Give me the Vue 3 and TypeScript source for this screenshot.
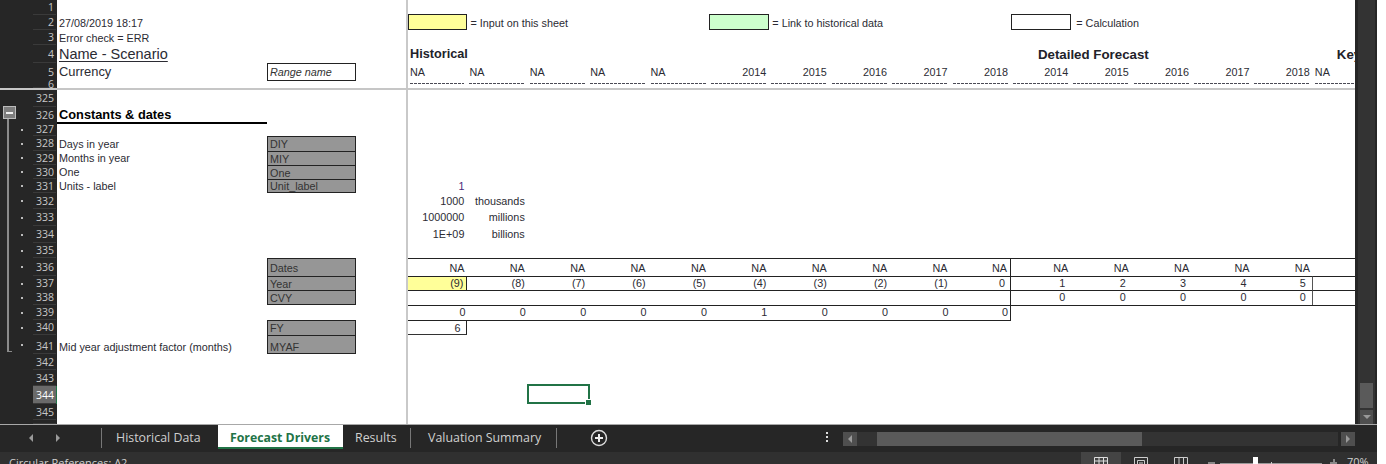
<script setup lang="ts">
interface Cell {
  t?: string
  cls?: string
}

interface Row {
  n: string
  h: number
  dot?: boolean
  label?: string
  labelCls?: string
  name?: string
  nameCls?: string
  cells?: Cell[]
  current?: boolean
  cls?: string
}

const COLS = 16

// builds a row of cells, same class on each, extra classes by column index
const line = (texts: string[], cls: string, extra: Record<number, string> = {}): Cell[] => {
  const out: Cell[] = []
  for (let i = 0; i < COLS; i++) {
    out.push({ t: texts[i] ?? '', cls: `${cls} ${extra[i] ?? ''}` })
  }
  return out
}

const na = Array(15).fill('NA')
const yearTitles = ['NA', 'NA', 'NA', 'NA', 'NA', '2014', '2015', '2016', '2017', '2018', '2014', '2015', '2016', '2017', '2018', 'NA']
const forecastPad = { 10: 'p6', 11: 'p6', 12: 'p6', 13: 'p6', 14: 'p6' }

const legendRow: Cell[] = line([], '')
legendRow[0] = { cls: 'legend yellow' }
legendRow[1] = { t: '= Input on this sheet', cls: 'left over note' }
legendRow[5] = { cls: 'legend green' }
legendRow[6] = { t: '= Link to historical data', cls: 'left over note' }
legendRow[10] = { cls: 'legend' }
legendRow[11] = { t: '= Calculation', cls: 'left over pad' }

const titleRow: Cell[] = line([], '')
titleRow[0] = { t: 'Historical', cls: 'left title over' }
titleRow[10] = { t: 'Detailed Forecast', cls: 'left title over forecast' }
titleRow[15] = { t: 'Key', cls: 'left title over key' }

const yearRow = yearTitles.map((t, i): Cell => ({ t, cls: i < 5 || i === 15 ? 'left' : '' }))
const dashRow = line([], 'dash')

const selRow: Cell[] = line([], '')
selRow[2] = { cls: 'sel' }

const rows: Row[] = [
  { n: '1', h: 15 },
  { n: '2', h: 15, label: '27/08/2019 18:17', cells: legendRow },
  { n: '3', h: 15, label: 'Error check = ERR' },
  { n: '4', h: 18, label: 'Name - Scenario', labelCls: 'big under', cells: titleRow },
  { n: '5', h: 17, label: 'Currency', labelCls: 'mid', name: 'Range name', nameCls: 'range', cells: yearRow },
  { n: '6', h: 8, cells: dashRow },
]

const body: Row[] = [
  { n: '325', h: 17 },
  { n: '326', h: 16, label: 'Constants & dates', labelCls: 'heading' },
  { n: '327', h: 13, dot: true },
  { n: '328', h: 15, dot: true, label: 'Days in year', name: 'DIY', nameCls: 'nm' },
  { n: '329', h: 14, dot: true, label: 'Months in year', name: 'MIY', nameCls: 'nm' },
  { n: '330', h: 14, dot: true, label: 'One', name: 'One', nameCls: 'nm' },
  {
    n: '331', h: 14, dot: true, label: 'Units - label', name: 'Unit_label', nameCls: 'nm end',
    cells: [{ t: '1', cls: 'purple' }],
  },
  { n: '332', h: 16, dot: true, cells: [{ t: '1000' }, { t: 'thousands' }] },
  { n: '333', h: 17, dot: true, cls: 'up', cells: [{ t: '1000000' }, { t: 'millions' }] },
  { n: '334', h: 17, dot: true, cls: 'up', cells: [{ t: '1E+09' }, { t: 'billions' }] },
  { n: '335', h: 15, dot: true },
  { n: '336', h: 18, dot: true, name: 'Dates', nameCls: 'nm', cells: line(na, 'bt', { 9: 'br' }) },
  {
    n: '337', h: 14, dot: true, cls: 'up', name: 'Year', nameCls: 'nm',
    cells: line(['(9)', '(8)', '(7)', '(6)', '(5)', '(4)', '(3)', '(2)', '(1)', '0', '1', '2', '3', '4', '5'], 'bt', {
      ...forecastPad,
      0: 'yellow br',
      9: 'br p5',
      14: 'br-soft p6',
    }),
  },
  {
    n: '338', h: 15, dot: true, cls: 'up', name: 'CVY', nameCls: 'nm end',
    cells: line(['', '', '', '', '', '', '', '', '', '', '0', '0', '0', '0', '0'], 'bt', {
      ...forecastPad,
      9: 'br',
      14: 'br-soft p6',
    }),
  },
  {
    n: '339', h: 15, dot: true, cls: 'up',
    cells: line(['0', '0', '0', '0', '0', '1', '0', '0', '0', '0'], 'bt p2', { 9: 'br p1' }).map((c, i) =>
      i > 9 ? { cls: 'bt' } : c,
    ),
  },
  {
    n: '340', h: 15, dot: true, name: 'FY', nameCls: 'nm',
    cells: [{ t: '6', cls: 'box-6' }, ...Array.from({ length: 9 }, (): Cell => ({ cls: 'bt' }))],
  },
  { n: '341', h: 19, dot: true, cls: 'low', label: 'Mid year adjustment factor (months)', name: 'MYAF', nameCls: 'nm end' },
  { n: '342', h: 16 },
  { n: '343', h: 16 },
  { n: '344', h: 18, current: true, cells: selRow },
  { n: '345', h: 16 },
  { n: '', h: 4 },
]

const cellAt = (row: Row, i: number): Cell => row.cells?.[i] ?? {}
</script>

<template>
  <div class="excel">
    <div class="workspace">
      <div class="sheet">
        <template v-for="(list, li) in [rows, body]" :key="li">
          <div v-if="li === 1" class="freeze"></div>
          <div v-for="row in list" :key="row.n" class="row" :class="row.cls" :style="{ height: row.h + 'px' }">
            <div class="rowhead" :class="{ current: row.current }">
              <i v-if="row.dot" class="dot"></i>
              <span class="num">{{ row.n }}</span>
            </div>
            <div class="label" :class="row.labelCls">{{ row.label }}</div>
            <div class="name" :class="row.nameCls">{{ row.name }}</div>
            <div class="gap"></div>
            <div v-for="i in COLS" :key="i" class="cell" :class="cellAt(row, i - 1).cls">
              <span v-if="cellAt(row, i - 1).t">{{ cellAt(row, i - 1).t }}</span>
            </div>
          </div>
        </template>
        <div class="outline">
          <div class="minus"></div>
          <div class="bracket"></div>
        </div>
      </div>
      <div class="vscroll">
        <div class="vthumb"></div>
        <div class="vbtn"><i></i></div>
      </div>
    </div>

    <div class="tabbar">
      <div class="nav">
        <i class="tri-left"></i>
        <i class="tri-right"></i>
      </div>
      <div class="tab first">Historical Data</div>
      <div class="tab active">Forecast Drivers</div>
      <div class="tab results">Results</div>
      <div class="tab valuation">Valuation Summary</div>
      <svg class="add" width="18" height="18" viewBox="0 0 18 18">
        <circle cx="9" cy="9" r="7.5" fill="none" stroke="#ddd" stroke-width="1.4" />
        <path d="M9 5v8M5 9h8" stroke="#eee" stroke-width="2" />
      </svg>
      <div class="more"><i></i><i></i><i></i></div>
      <div class="hscroll">
        <div class="hbtn"><i class="tri-left"></i></div>
        <div class="htrack"><div class="hthumb"></div></div>
        <div class="hbtn"><i class="tri-right"></i></div>
      </div>
    </div>

    <div class="status">
      <span class="circ">Circular References: A2</span>
      <div class="views">
        <div class="view on">
          <svg width="14" height="12" viewBox="0 0 14 12">
            <path d="M.5.5h13v11H.5zM.5 4h13M.5 8h13M5 .5v11M9.500 .5v11" fill="none" stroke="#ddd" />
          </svg>
        </div>
        <div class="view">
          <svg width="14" height="12" viewBox="0 0 14 12">
            <path d="M.5.5h13v11H.5zM3.500 3.500h7v8h-7zM5 6h4M5 8h4" fill="none" stroke="#ccc" />
          </svg>
        </div>
        <div class="view">
          <svg width="14" height="12" viewBox="0 0 14 12">
            <path d="M.5.5h13v11H.5zM5 .5v11M9.500 .5v11" fill="none" stroke="#ccc" />
          </svg>
        </div>
      </div>
      <div class="zoombar">
        <i class="zminus"></i>
        <div class="slider"><i class="knob"></i><i class="tick"></i></div>
        <i class="zplus"></i>
      </div>
      <span class="pct">70%</span>
    </div>
  </div>
</template>

<style scoped>
.excel {
  width: 1377px;
  height: 464px;
  overflow: hidden;
  display: flex;
  flex-direction: column;
  background: #262626;
  font-family: 'Liberation Sans', Arial, sans-serif;
}

.workspace {
  display: flex;
  height: 424px;
  flex: none;
}

.sheet {
  position: relative;
  width: 1355px;
  overflow: hidden;
  background: #fff;
  flex: none;
}

.row {
  display: grid;
  grid-template-columns: 57px 210px 89px 52px 59.4px repeat(15, 60.4px);
  font-size: 10.8px;
  color: #2b2b33;
}

.freeze {
  height: 2px;
  background: #c6c6c6;
  position: relative;
  z-index: 2;
}

.rowhead {
  position: relative;
  background: #262626;
  display: flex;
  justify-content: flex-end;
  overflow: hidden;
}

.num {
  width: 23px;
  margin-right: 1px;
  padding-right: 2px;
  box-sizing: border-box;
  text-align: right;
  font-family: 'Open Sans', sans-serif;
  font-size: 10.5px;
  color: #c6c6c6;
  display: flex;
  align-items: center;
  justify-content: flex-end;
  border-bottom: 1px solid #3a3a3a;
}

.rowhead.current .num {
  background: #6a6a6a;
  color: #fff;
}

.rowhead.current {
  box-shadow: inset -1px 0 0 #217346;
}

.dot {
  position: absolute;
  left: 21px;
  top: 50%;
  width: 2px;
  height: 2px;
  margin-top: -1px;
  background: #bbb;
}

.label {
  padding-left: 2px;
  display: flex;
  align-items: center;
  white-space: nowrap;
  overflow: visible;
  min-width: 0;
}

.label.big {
  font-size: 14.5px;
}

.label.mid {
  font-size: 12.9px;
  padding-bottom: 2px;
}

.label.under {
  text-decoration: underline;
  text-underline-offset: 2px;
  text-decoration-thickness: 1px;
}

.label.heading {
  font-size: 12.8px;
  font-weight: 700;
  color: #000;
  border-bottom: 2px solid #000;
  box-sizing: border-box;
}

.name {
  display: flex;
  align-items: center;
  padding-left: 2px;
  white-space: nowrap;
  min-width: 0;
  box-sizing: border-box;
}

.name.nm {
  background: #969696;
  color: #333;
  border: 1px solid #222;
  border-bottom: none;
}

.name.nm.end {
  border-bottom: 1px solid #222;
}

.name.range {
  align-self: start;
  height: 18px;
  border: 1px solid #222;
  font-style: italic;
  font-size: 10.8px;
  color: #333;
}

.row.low .label,
.row.low .name,
.row.low .num {
  padding-top: 4px;
}

.row.up .cell {
  padding-bottom: 2px;
}

.gap {
  border-right: 2px solid #c9c9c9;
  box-sizing: content-box;
  width: 50px;
}

.cell {
  position: relative;
  display: flex;
  align-items: center;
  justify-content: flex-end;
  padding-right: 3px;
  box-sizing: border-box;
  white-space: nowrap;
  min-width: 0;
}

.cell.p1 {
  padding-right: 1px;
}

.cell.p2 {
  padding-right: 2px;
}

.cell.p5 {
  padding-right: 5px;
}

.cell.p6 {
  padding-right: 6px;
}

.cell.left {
  justify-content: flex-start;
  padding-left: 2px;
  padding-right: 0;
}

.cell.over {
  overflow: visible;
}

.cell.note {
  padding-left: 3px;
}

.cell.pad {
  padding-left: 5px;
}

.cell.title {
  font-size: 12.7px;
  font-weight: 700;
  color: #22222a;
}

.cell.forecast {
  padding-left: 27px;
  font-size: 13.3px;
}

.cell.key {
  padding-left: 24px;
  font-size: 13.3px;
}

.cell.purple {
  color: #4b2a7b;
}

.cell.legend {
  border: 1px solid #222;
  margin-top: -1px;
}

.cell.yellow {
  background: #ffff99;
}

.cell.green {
  background: #ccffcc;
}

.cell.bt {
  border-top: 1px solid #222;
}

.cell.br {
  border-right: 1px solid #222;
}

.cell.br-soft {
  border-right: 1px solid #555;
}

.cell.box-6 {
  border-top: 1px solid #222;
  border-right: 1px solid #222;
  border-bottom: 1px solid #333;
  padding-right: 6px;
}

.cell.dash {
  padding: 0;
  margin: 3px 3px 0 2px;
  height: 1px;
  background: repeating-linear-gradient(90deg, #4a4a55 0 3px, #fff 3px 4px);
}

.cell.sel {
  z-index: 1;
}

.cell.sel::before {
  content: '';
  position: absolute;
  inset: -2px -2px 0 -1px;
  border: 2px solid #217346;
}

.cell.sel::after {
  content: '';
  position: absolute;
  right: -3px;
  bottom: -1px;
  width: 5px;
  height: 5px;
  background: #217346;
  border: 1px solid #fff;
  border-right: none;
  border-bottom: none;
}

.outline {
  position: absolute;
  left: 0;
  top: 0;
}

.minus {
  position: absolute;
  left: 3px;
  top: 106px;
  width: 13px;
  height: 13px;
  box-sizing: border-box;
  background: linear-gradient(#f0f0f0, #f0f0f0) center / 7px 2px no-repeat, #7d7d7d;
  border: 1px solid #bbb;
}

.bracket {
  position: absolute;
  left: 7px;
  top: 119px;
  width: 5px;
  height: 233px;
  box-sizing: border-box;
  border-left: 2px solid #8a8a8a;
  border-bottom: 1px solid #8a8a8a;
}

.vscroll {
  flex: none;
  width: 22px;
  height: 424px;
  box-sizing: border-box;
  padding-left: 3px;
  display: flex;
  flex-direction: column;
  justify-content: flex-end;
  background: linear-gradient(90deg, #262626 0 3px, #333 3px 20px, #262626 20px);
}

.vthumb {
  width: 13px;
  height: 25px;
  margin: 0 0 2px 2px;
  background: #5a5a5a;
}

.vbtn {
  width: 13px;
  height: 14px;
  margin-left: 2px;
  background: #4f4f4f;
  display: flex;
  align-items: center;
  justify-content: center;
}

.vbtn i {
  border-left: 4px solid transparent;
  border-right: 4px solid transparent;
  border-top: 4px solid #999;
}

.tabbar {
  flex: none;
  height: 28px;
  display: flex;
  align-items: flex-start;
  background: #262626;
  box-sizing: border-box;
  border-top: 1px solid #a8a8a8;
  font-family: 'Open Sans', sans-serif;
  font-size: 12.4px;
  color: #d0d0d0;
  position: relative;
}

.nav {
  width: 102px;
  height: 20px;
  margin-top: 3px;
  box-sizing: border-box;
  border-right: 1px solid #777;
  display: flex;
  align-items: center;
  padding-left: 29px;
  gap: 23px;
  flex: none;
}

.tri-left,
.tri-right {
  border-top: 4px solid transparent;
  border-bottom: 4px solid transparent;
  display: block;
}

.tri-left {
  border-right: 4px solid #9a9a9a;
}

.tri-right {
  border-left: 4px solid #9a9a9a;
}

.tab {
  height: 24px;
  line-height: 26px;
  box-sizing: border-box;
  white-space: nowrap;
  flex: none;
}

.tab.first {
  width: 116px;
  padding-left: 14px;
}

.tab.active {
  width: 125px;
  padding-left: 12px;
  background: #fff;
  color: #217346;
  font-size: 12.3px;
  font-weight: 700;
  border-bottom: 2px solid #217346;
  line-height: 25px;
}

.tab.results {
  width: 68px;
  padding-left: 12px;
  position: relative;
}

.tab.results::after,
.tab.valuation::after {
  content: '';
  position: absolute;
  right: 0;
  top: 3px;
  height: 20px;
  width: 1px;
  background: #777;
}

.tab.valuation {
  width: 146px;
  padding-left: 17px;
  position: relative;
}

.add {
  flex: none;
  margin: 4px 0 0 33px;
}

.more {
  flex: none;
  margin: 7px 0 0 218px;
  width: 2px;
  display: flex;
  flex-direction: column;
  gap: 2px;
}

.more i {
  width: 2px;
  height: 2px;
  background: #ddd;
}

.hscroll {
  position: absolute;
  left: 843px;
  top: 7px;
  width: 512px;
  height: 14px;
  display: flex;
}

.hbtn {
  flex: none;
  width: 14px;
  background: #4f4f4f;
  display: flex;
  align-items: center;
  justify-content: center;
}

.htrack {
  flex: 1;
  background: #333;
  margin-right: 3px;
  padding-left: 20px;
}

.hthumb {
  width: 265px;
  height: 14px;
  background: #5a5a5a;
}

.status {
  flex: none;
  height: 12px;
  position: relative;
  background: #303030;
  overflow: hidden;
  font-family: 'Open Sans', sans-serif;
  font-size: 11px;
  color: #d0d0d0;
  display: flex;
  align-items: flex-start;
}

.circ {
  margin: 4px 0 0 9px;
  line-height: 14px;
}

.views {
  position: absolute;
  left: 1081px;
  top: 0;
  display: flex;
}

.view {
  width: 40px;
  height: 16px;
  display: flex;
  justify-content: center;
  padding-top: 5px;
  box-sizing: border-box;
}

.view.on {
  background: #444;
}

.zoombar {
  position: absolute;
  left: 1208px;
  top: 11px;
  display: flex;
  align-items: flex-start;
}

.zminus {
  width: 7px;
  height: 2px;
  margin-top: -1px;
  background: #888;
}

.slider {
  position: relative;
  width: 102px;
  height: 1px;
  margin-left: 5px;
  background: #999;
}

.knob {
  position: absolute;
  left: 33px;
  top: -6px;
  width: 5px;
  height: 10px;
  background: #fff;
}

.tick {
  position: absolute;
  left: 51px;
  top: -1px;
  width: 1px;
  height: 5px;
  background: #ccc;
}

.zplus {
  position: relative;
  width: 7px;
  height: 2px;
  margin-left: 8px;
  margin-top: -1px;
  background: #888;
}

.zplus::after {
  content: '';
  position: absolute;
  left: 3px;
  top: -3px;
  width: 2px;
  height: 8px;
  background: #888;
}

.pct {
  position: absolute;
  left: 1347px;
  top: 3px;
  line-height: 14px;
}
</style>
